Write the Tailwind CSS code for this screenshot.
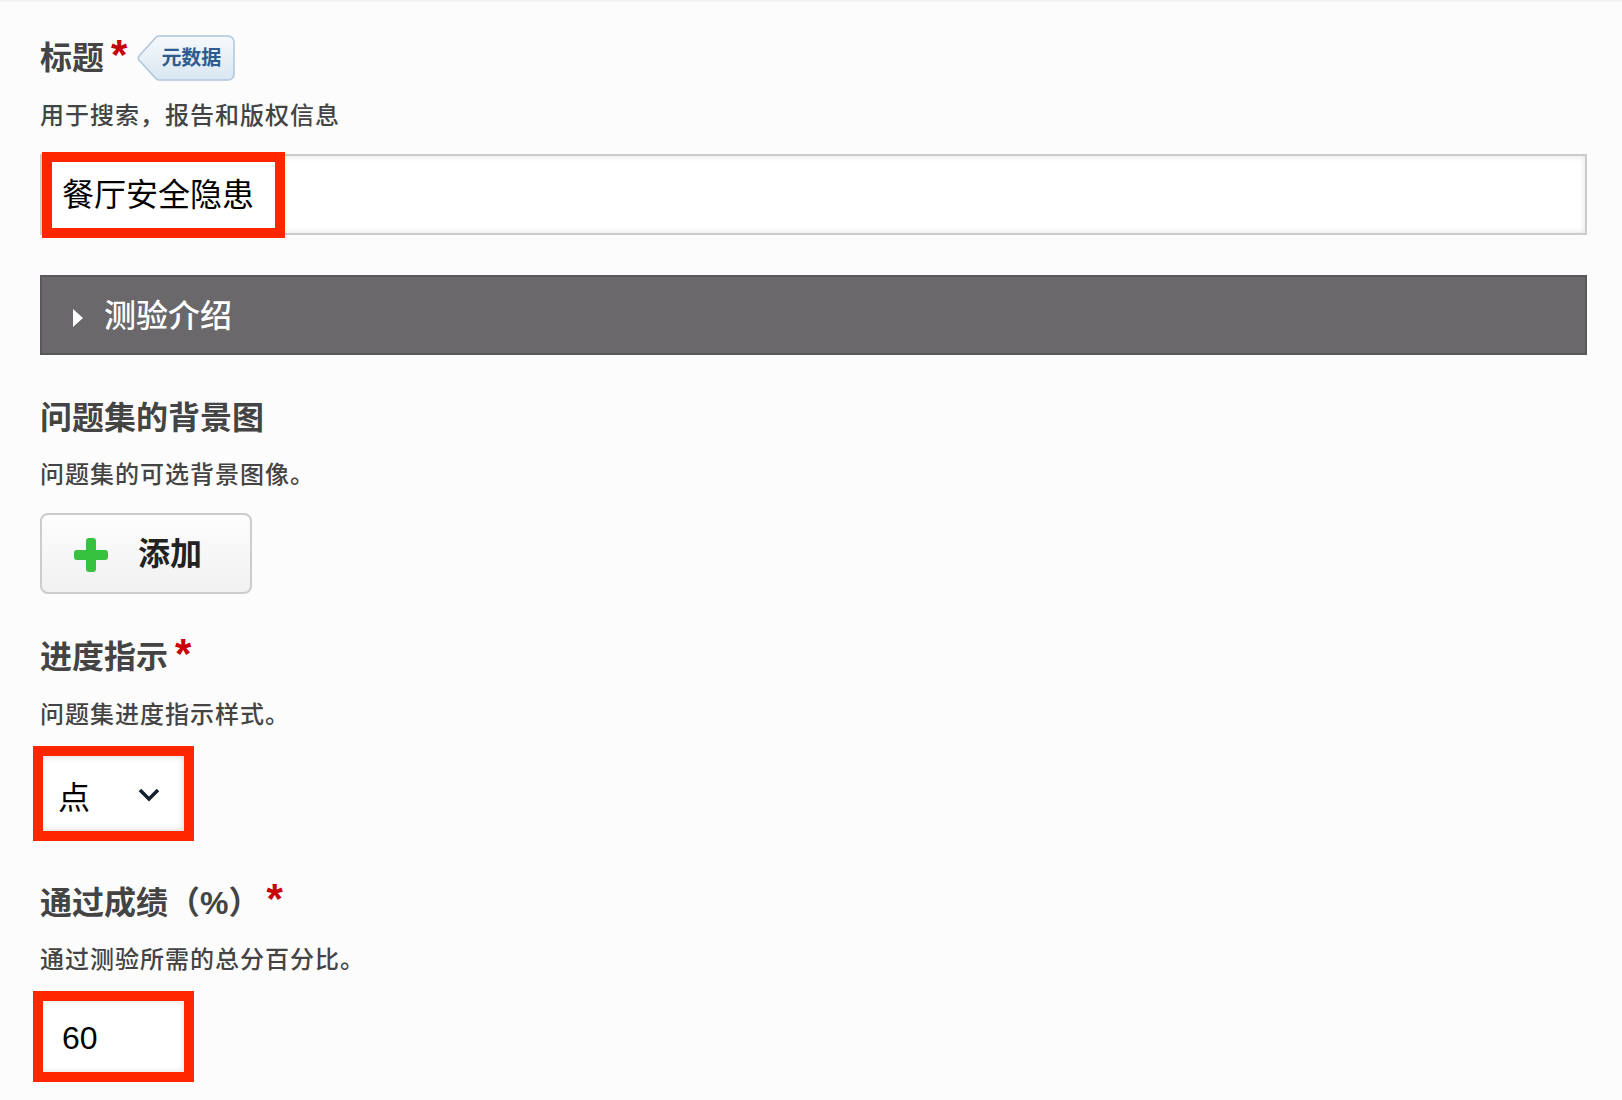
<!DOCTYPE html>
<html lang="zh-CN">
<head>
    <meta charset="UTF-8">
    <meta name="viewport" content="width=device-width, initial-scale=1.0">
    <title>测验设置</title>
    <script src="https://cdn.jsdelivr.net/npm/@tailwindcss/browser@4"></script>
</head>
<body class="bg-[#fcfcfc] min-h-screen overflow-hidden font-['Liberation_Sans','Noto_Sans_CJK_SC',sans-serif]">
    <div class="h-[3px] bg-gradient-to-b from-[#f0f0f0] to-[#fcfcfc]"></div>
    <main class="pl-[40px] pr-[35px] pt-[32px]">
        <!-- title -->
        <div class="h-[46px] flex items-center">
            <h2 class="text-[32px] leading-[46px] font-bold text-[#444]">标题</h2>
            <span class="ml-[7px] -mt-[6px] text-[42px] leading-[32px] font-bold text-[#c8000a]">*</span>
            <span class="relative ml-[10px] h-[46px] w-[98px]">
                <svg class="absolute inset-0" width="98" height="46" viewBox="0 0 98 46">
                    <defs>
                        <linearGradient id="tag" x1="0" y1="0" x2="0" y2="1">
                            <stop offset="0" stop-color="#f6f9fc"/>
                            <stop offset="1" stop-color="#d9e6f1"/>
                        </linearGradient>
                    </defs>
                    <path d="M22 1H91a6 6 0 0 1 6 6V39a6 6 0 0 1-6 6H22a4 4 0 0 1-3-1.2L2 25a3.5 3.5 0 0 1 0-4L19 2.2A4 4 0 0 1 22 1z" fill="url(#tag)" stroke="#aec6db" stroke-width="1.5"/>
                </svg>
                <span class="absolute left-[24px] top-0 text-[20px] leading-[46px] font-bold text-[#2d5d8f]">元数据</span>
            </span>
        </div>
        <p class="mt-[16px] h-[36px] text-[24px] leading-[38px] tracking-[1px] font-medium text-[#444]">用于搜索，报告和版权信息</p>
        <div class="relative mt-[21px] h-[81px] border-2 border-[#ccc] bg-white shadow-[inset_0_0_6px_rgba(0,0,0,0.12)] pl-[20px] text-[32px] leading-[79px] text-black">
            餐厅安全隐患
            <div class="absolute left-[0px] top-[-4px] w-[243px] h-[86px] border-[10px] border-[#ff2600]"></div>
        </div>

        <!-- intro bar -->
        <div class="mt-[40px] h-[80px] border-2 border-[#5a585b] bg-[#6a686b] flex items-center pl-[31px]">
            <svg class="mt-[5px]" width="10" height="18" viewBox="0 0 10 18"><path d="M0 0L10 9L0 18z" fill="#fff"/></svg>
            <span class="ml-[21px] mt-[2px] text-[32px] leading-[76px] font-medium text-white">测验介绍</span>
        </div>

        <!-- background -->
        <h2 class="mt-[40px] h-[46px] text-[32px] leading-[46px] font-bold text-[#444]">问题集的背景图</h2>
        <p class="mt-[15px] h-[36px] text-[24px] leading-[38px] tracking-[1px] font-medium text-[#444]">问题集的可选背景图像。</p>
        <button class="mt-[21px] w-[212px] h-[81px] rounded-[8px] border-2 border-[#ccc] bg-gradient-to-b from-[#fdfdfd] to-[#f1f1f1] flex items-center pl-[32px]">
            <svg class="mt-[2px]" width="34" height="34" viewBox="0 0 34 34"><path d="M12 3a3 3 0 0 1 3-3h4a3 3 0 0 1 3 3v9h9a3 3 0 0 1 3 3v4a3 3 0 0 1-3 3h-9v9a3 3 0 0 1-3 3h-4a3 3 0 0 1-3-3v-9H3a3 3 0 0 1-3-3v-4a3 3 0 0 1 3-3h9z" fill="#36c23e"/></svg>
            <span class="ml-[30px] text-[32px] leading-[46px] font-bold text-[#222]">添加</span>
        </button>

        <!-- progress -->
        <div class="mt-[40px] h-[46px] flex items-center">
            <h2 class="text-[32px] leading-[46px] font-bold text-[#444]">进度指示</h2>
            <span class="ml-[7px] -mt-[6px] text-[42px] leading-[32px] font-bold text-[#c8000a]">*</span>
        </div>
        <p class="mt-[17px] h-[36px] text-[24px] leading-[36px] tracking-[1px] font-medium text-[#444]">问题集进度指示样式。</p>
        <div class="relative mt-[23px] w-[144px] h-[75px] bg-white shadow-[inset_0_0_7px_rgba(0,0,0,0.18)] flex items-center justify-between pl-[18px] pr-[24px] text-[32px] text-black">
            <span class="mt-[8px]">点</span>
            <svg class="mt-[2px]" width="22" height="14" viewBox="0 0 22 14"><path d="M2 2L11 11L20 2" fill="none" stroke="#14202e" stroke-width="3.5"/></svg>
            <div class="absolute left-[-7px] top-[-10px] w-[161px] h-[95px] border-[10px] border-[#ff2600]"></div>
        </div>

        <!-- passing grade -->
        <div class="mt-[48px] h-[46px] flex items-center">
            <h2 class="mt-[2px] text-[32px] leading-[46px] font-bold text-[#444]">通过成绩（%）</h2>
            <span class="ml-[6px] -mt-[6px] text-[42px] leading-[32px] font-bold text-[#c8000a]">*</span>
        </div>
        <p class="mt-[17px] h-[36px] text-[24px] leading-[36px] tracking-[1px] font-medium text-[#444]">通过测验所需的总分百分比。</p>
        <div class="relative mt-[23px] w-[144px] h-[71px] bg-white shadow-[inset_0_0_6px_rgba(0,0,0,0.12)] pl-[22px] text-[32px] leading-[75px] text-black">
            60
            <div class="absolute left-[-7px] top-[-10px] w-[161px] h-[91px] border-[10px] border-[#ff2600]"></div>
        </div>
    </main>
</body>
</html>
